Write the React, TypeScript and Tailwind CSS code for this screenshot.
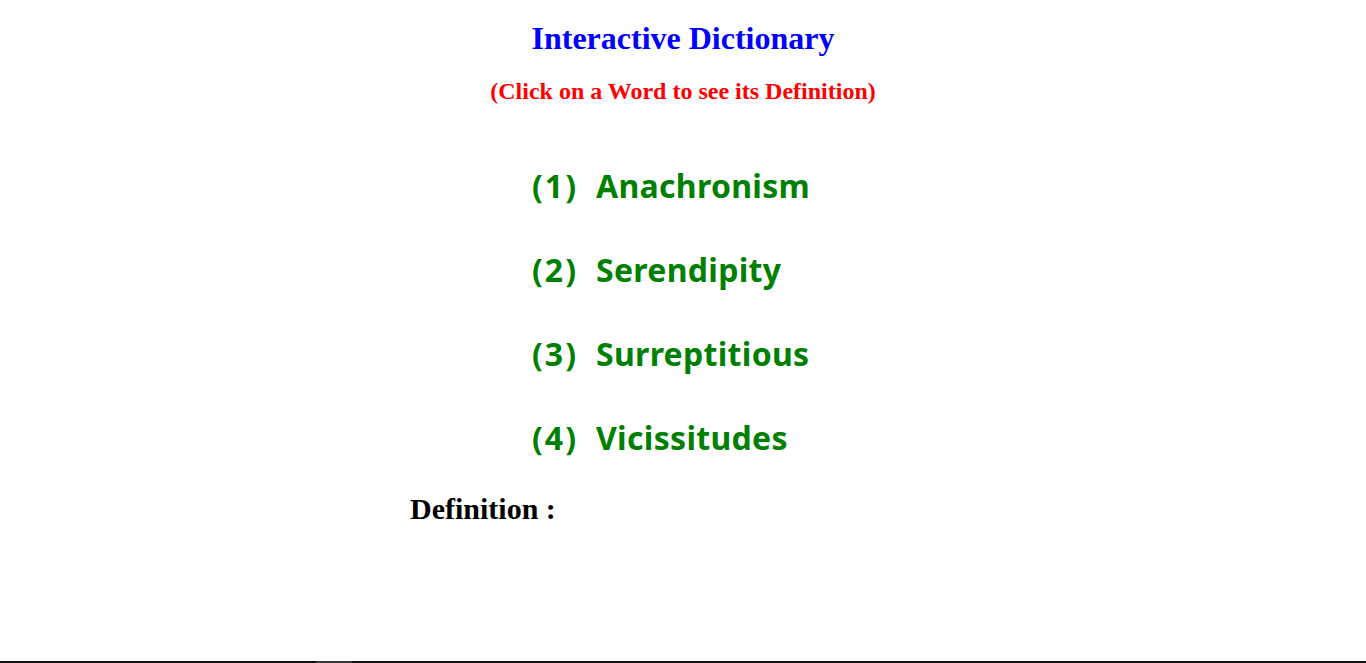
import React, { useState } from 'react';

const words: { word: string; definition: string }[] = [
  { word: 'Anachronism', definition: 'Something that is out of place in time.' },
  { word: 'Serendipity', definition: 'Finding something good without looking for it.' },
  { word: 'Surreptitious', definition: 'Done secretly, without others knowing.' },
  { word: 'Vicissitudes', definition: 'Changes of circumstance or fortune.' },
];

const App: React.FC = () => {
  const [selected, setSelected] = useState<number | null>(null);

  return (
    <div className="min-h-screen flex flex-col bg-white font-['Liberation_Serif','Times_New_Roman',serif]">
      <div className="pt-[20px] flex flex-col items-center">
        <h1 className="text-[32px] leading-[36px] font-bold text-[#0000ff]">Interactive Dictionary</h1>
        <h2 className="mt-[21px] text-[24px] leading-[28px] font-bold text-[#ff0000]">
          (Click on a Word to see its Definition)
        </h2>
      </div>

      <div className="w-[546px] mx-auto mt-[39px]">
        <ul className="pl-[122px]">
          {words.map((w, i) => (
            <li
              key={w.word}
              onClick={() => setSelected(i)}
              className="h-[84px] flex items-center cursor-pointer text-[32px] font-bold text-[#008000] font-['Comic_Sans_MS','Noto_Sans',sans-serif]"
            >
              <span className="inline-block w-[64px] tracking-[2px]">({i + 1})</span>
              <span className="tracking-[0.3px]">{w.word}</span>
            </li>
          ))}
        </ul>

        <div className="mt-[12px] flex items-center gap-3 text-[30px] leading-[34px] font-bold text-black">
          <span>Definition :</span>
          {selected !== null && (
            <span className="text-[22px] font-normal">{words[selected].definition}</span>
          )}
        </div>
      </div>

      <div className="flex-1" />
      <div className="h-[2px] bg-[#111111] flex">
        <div className="ml-[316px] w-[36px] bg-[#3a3a3a]" />
      </div>
    </div>
  );
};

export default App;
